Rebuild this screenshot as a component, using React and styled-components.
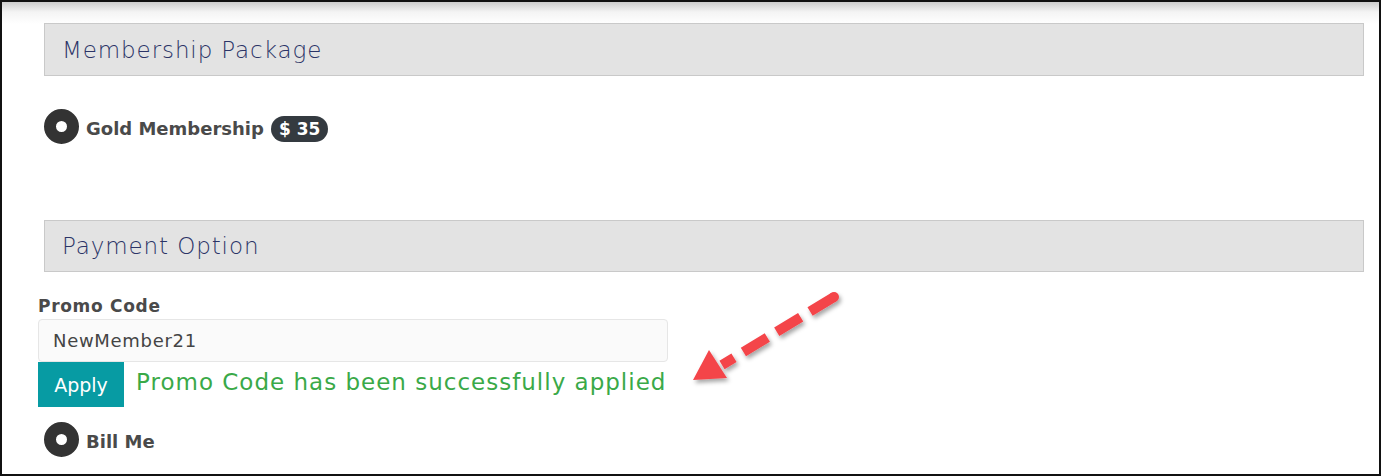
import React, { useState } from 'react';
import styled, { createGlobalStyle } from 'styled-components';

const GlobalStyle = createGlobalStyle`
  html, body {
    margin: 0;
    padding: 0;
    background: #fff;
  }
  body {
    font-family: "DejaVu Sans", "Open Sans", sans-serif;
  }
`;

const Frame = styled.div`
  position: relative;
  box-sizing: border-box;
  width: 1381px;
  height: 476px;
  border: 2px solid #111;
  background: linear-gradient(#cdcdcd 0, #f4f4f4 10px, #fff 22px);
  overflow: hidden;
`;

const Content = styled.div`
  display: flex;
  flex-direction: column;
  padding: 21px 15px 0 36px;
`;

const SectionHeader = styled.div`
  margin-left: 6px;
  margin-top: ${(p) => p.$top || 0}px;
  height: ${(p) => p.$height}px;
  box-sizing: border-box;
  display: flex;
  align-items: center;
  padding-left: 17px;
  background: #e3e3e3;
  border: 1px solid #c9c9c9;
  color: #2b3467;
  font-size: 23px;
  font-weight: 300;
  letter-spacing: 0.9px;
`;

const RadioRow = styled.label`
  display: flex;
  align-items: center;
  gap: 7px;
  margin-left: 6px;
  margin-top: ${(p) => p.$top}px;
`;

const RadioDot = styled.span`
  box-sizing: border-box;
  width: 35px;
  height: 35px;
  border-radius: 50%;
  border: 12px solid #333;
  background: #fff;
  flex-shrink: 0;
`;

const OptionText = styled.span`
  margin-top: 4px;
  color: #4a4a4a;
  font-size: 18px;
  font-weight: bold;
`;

const Badge = styled.span`
  margin-top: 4px;
  display: inline-flex;
  align-items: center;
  height: 26px;
  padding: 0 8px;
  border-radius: 13px;
  background: #343a40;
  color: #fff;
  font-size: 17px;
  font-weight: bold;
`;

const FieldLabel = styled.div`
  margin-top: 21px;
  color: #4a4a4a;
  font-size: 17px;
  font-weight: bold;
  letter-spacing: 0.7px;
  line-height: 26px;
`;

const PromoInput = styled.input`
  box-sizing: border-box;
  width: 630px;
  height: 43px;
  padding: 0 14px;
  background: #fafafa;
  border: 1px solid #e6e6e6;
  border-radius: 4px;
  color: #444;
  font-family: inherit;
  font-size: 18px;
  letter-spacing: 0.7px;
  outline: none;
`;

const ApplyRow = styled.div`
  display: flex;
  align-items: center;
  gap: 12px;
`;

const ApplyButton = styled.button`
  width: 86px;
  height: 45px;
  border: none;
  background: #079ba3;
  color: #fff;
  font-family: inherit;
  font-size: 19px;
  padding: 0;
  cursor: pointer;
`;

const SuccessText = styled.span`
  color: #3aa948;
  font-size: 23px;
  letter-spacing: 1px;
  margin-top: -6px;
`;

const Annotation = styled.svg`
  position: absolute;
  left: 680px;
  top: 280px;
  pointer-events: none;
`;

const App = () => {
  const [code, setCode] = useState('NewMember21');

  return (
    <>
      <GlobalStyle />
      <Frame>
        <Content>
          <SectionHeader $height={53}>Membership Package</SectionHeader>
          <RadioRow $top={33}>
            <RadioDot />
            <OptionText>Gold Membership</OptionText>
            <Badge>$ 35</Badge>
          </RadioRow>
          <SectionHeader $height={52} $top={76}>
            Payment Option
          </SectionHeader>
          <FieldLabel>Promo Code</FieldLabel>
          <PromoInput value={code} onChange={(e) => setCode(e.target.value)} />
          <ApplyRow>
            <ApplyButton type="button">Apply</ApplyButton>
            <SuccessText>Promo Code has been successfully applied</SuccessText>
          </ApplyRow>
          <RadioRow $top={15}>
            <RadioDot />
            <OptionText>Bill Me</OptionText>
          </RadioRow>
        </Content>
        <Annotation width="170" height="110" viewBox="0 0 170 110">
          <defs>
            <filter id="arrowShadow" x="-20%" y="-20%" width="140%" height="140%">
              <feDropShadow dx="2" dy="3" stdDeviation="2" floodColor="#000" floodOpacity="0.35" />
            </filter>
          </defs>
          <g filter="url(#arrowShadow)" fill="#f4444a" stroke="#f4444a">
            <path
              d="M152 15 L40 83"
              strokeWidth="10"
              strokeDasharray="28 11"
              fill="none"
            />
            <circle cx="152" cy="15" r="5" stroke="none" />
            <polygon points="11,98 27,68 45,96" stroke="none" />
          </g>
        </Annotation>
      </Frame>
    </>
  );
};

export default App;
